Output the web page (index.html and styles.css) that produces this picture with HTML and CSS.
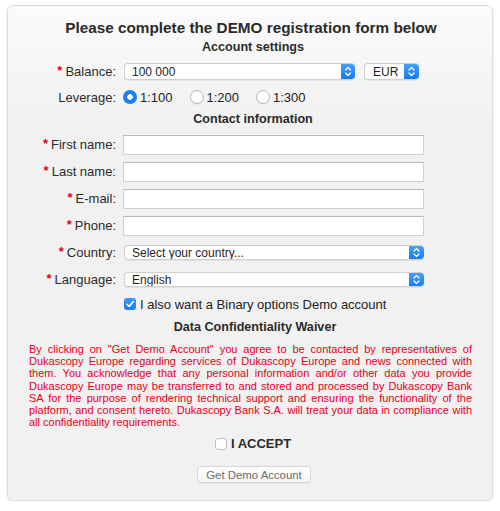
FILE: index.html
```html
<!DOCTYPE html>
<html lang="en">
<head>
<meta charset="utf-8">
<title>DEMO registration</title>
<link rel="stylesheet" href="styles.css">
</head>
<body>
<div class="panel">
  <h1 class="title">Please complete the DEMO registration form below</h1>
  <h2 class="section sec-account">Account settings</h2>

  <div class="row row-balance">
    <label class="row-label"><span class="req">*</span>Balance:</label>
    <div class="field-inline">
      <div class="select select-balance">
        <span class="select-value">100 000</span>
        <span class="select-arrow"><svg viewBox="0 0 14 17" width="14" height="17"><polyline points="4.5,7 7,4.5 9.5,7"/><polyline points="4.5,10 7,12.5 9.5,10"/></svg></span>
      </div>
      <div class="select select-cur">
        <span class="select-value">EUR</span>
        <span class="select-arrow"><svg viewBox="0 0 14 17" width="15" height="17"><polyline points="4.5,7 7,4.5 9.5,7"/><polyline points="4.5,10 7,12.5 9.5,10"/></svg></span>
      </div>
    </div>
  </div>

  <div class="row row-leverage">
    <label class="row-label">Leverage:</label>
    <div class="radios">
      <span class="radio-opt"><span class="radio radio-on"></span>1:100</span>
      <span class="radio-opt"><span class="radio"></span>1:200</span>
      <span class="radio-opt"><span class="radio"></span>1:300</span>
    </div>
  </div>

  <h2 class="section sec-contact">Contact information</h2>

  <div class="row row-field">
    <label class="row-label"><span class="req">*</span>First name:</label>
    <span class="input"></span>
  </div>
  <div class="row row-field">
    <label class="row-label"><span class="req">*</span>Last name:</label>
    <span class="input"></span>
  </div>
  <div class="row row-field">
    <label class="row-label"><span class="req">*</span>E-mail:</label>
    <span class="input"></span>
  </div>
  <div class="row row-field">
    <label class="row-label"><span class="req">*</span>Phone:</label>
    <span class="input"></span>
  </div>
  <div class="row row-field">
    <label class="row-label"><span class="req">*</span>Country:</label>
    <div class="select select-wide">
      <span class="select-value">Select your country...</span>
      <span class="select-arrow"><svg viewBox="0 0 14 15" width="15" height="15"><polyline points="4.5,6 7,3.5 9.5,6"/><polyline points="4.5,9 7,11.5 9.5,9"/></svg></span>
    </div>
  </div>
  <div class="row row-field">
    <label class="row-label"><span class="req">*</span>Language:</label>
    <div class="select select-wide">
      <span class="select-value">English</span>
      <span class="select-arrow"><svg viewBox="0 0 14 15" width="15" height="15"><polyline points="4.5,6 7,3.5 9.5,6"/><polyline points="4.5,9 7,11.5 9.5,9"/></svg></span>
    </div>
  </div>

  <div class="row row-check">
    <span></span>
    <span class="check-line"><span class="checkbox checkbox-on"><svg viewBox="0 0 12 12" width="12" height="12"><polyline points="3,6.3 5.2,8.5 9.2,3.6"/></svg></span>I also want a Binary options Demo account</span>
  </div>

  <h2 class="section sec-waiver">Data Confidentiality Waiver</h2>

  <p class="waiver">By clicking on "Get Demo Account" you agree to be contacted by representatives of Dukascopy Europe regarding services of Dukascopy Europe and news connected with them. You acknowledge that any personal information and/or other data you provide Dukascopy Europe may be transferred to and stored and processed by Dukascopy Bank SA for the purpose of rendering technical support and ensuring the functionality of the platform, and consent hereto. Dukascopy Bank S.A. will treat your data in compliance with all confidentiality requirements.</p>

  <div class="accept">
    <span class="checkbox"></span><span class="accept-text">I ACCEPT</span>
  </div>

  <div class="actions">
    <button class="btn" type="button">Get Demo Account</button>
  </div>
</div>
</body>
</html>
```

FILE: styles.css
```css
* { box-sizing: border-box; }

body {
  margin: 0;
  background: #ffffff;
  font-family: "Liberation Sans", Arial, Helvetica, sans-serif;
  color: #2b2b2b;
}

.panel {
  margin: 5px 0 0 7px;
  width: 486px;
  height: 496px;
  border: 1px solid #dcdcdc;
  border-radius: 6px;
  background: linear-gradient(#fbfbfb, #f1f1f1 120px, #f1f1f1);
  box-shadow: 0 1px 2px rgba(0, 0, 0, 0.12);
}

.title {
  margin: 0;
  padding-top: 12px;
  height: 31px;
  line-height: 20px;
  font-size: 15.3px;
  font-weight: bold;
  text-align: center;
  color: #2b2b2b;
  padding-left: 2px;
}

.section {
  margin: 0;
  font-size: 12.6px;
  font-weight: bold;
  text-align: center;
  color: #2b2b2b;
  padding-left: 6px;
}

.sec-account { height: 20px; line-height: 20px; }
.sec-contact { height: 23px; line-height: 23px; }
.sec-waiver { height: 24px; line-height: 24px; padding-left: 10px; }

.row {
  display: grid;
  grid-template-columns: 108px 1fr;
  column-gap: 8px;
  align-items: center;
  font-size: 13px;
}

.row-balance { height: 29px; }
.row-leverage { height: 22px; }
.row-field { height: 27px; }
.row-check { height: 22px; }

.row-label {
  text-align: right;
  color: #2b2b2b;
  white-space: nowrap;
}

.req {
  color: #e0001b;
  font-weight: bold;
  margin-right: 3px;
  position: relative;
  top: -1px;
}

.field-inline {
  display: flex;
  align-items: center;
  gap: 9px;
}

.select {
  display: flex;
  align-items: stretch;
  background: #ffffff;
  border: 1px solid #cfcfcf;
  border-right: none;
  border-radius: 4px;
  box-shadow: 0 1px 0 rgba(0, 0, 0, 0.06);
  overflow: hidden;
  font-size: 12px;
  color: #1e1e1e;
}

.select-value {
  flex: 1;
  padding-left: 7px;
  display: flex;
  align-items: center;
  white-space: nowrap;
}

.select-arrow {
  flex: none;
  display: flex;
  align-items: center;
  justify-content: center;
  background: linear-gradient(#4aa3ff, #1477f2);
  border-radius: 0 4px 4px 0;
  margin: -1px 0;
}

.select-arrow svg polyline {
  fill: none;
  stroke: #ffffff;
  stroke-width: 1.3;
  stroke-linecap: round;
  stroke-linejoin: round;
}

.select-balance { width: 231px; height: 17px; }
.select-cur { width: 55px; height: 17px; }
.select-cur .select-value { padding-left: 8px; }
.select-wide { width: 300px; height: 15px; }

.radios {
  display: flex;
  align-items: center;
  margin-left: -1px;
}

.radio-opt {
  display: inline-flex;
  align-items: center;
  width: 66.5px;
  flex: none;
  color: #222;
}

.radio {
  width: 14px;
  height: 14px;
  border-radius: 50%;
  background: #ffffff;
  border: 1px solid #b9b9b9;
  margin-right: 3px;
  box-shadow: 0 1px 1px rgba(0, 0, 0, 0.05);
}

.radio-on {
  border: none;
  background: radial-gradient(circle, #ffffff 0 2.6px, #1b7ef5 3px);
}

.input {
  display: block;
  width: 301px;
  height: 20px;
  margin-left: -1px;
  background: #ffffff;
  border: 1px solid #d0d0d0;
  border-top-color: #b8b8b8;
}

.check-line {
  display: flex;
  align-items: center;
  color: #222;
}

.checkbox {
  display: inline-block;
  width: 12px;
  height: 12px;
  border-radius: 3px;
  background: #ffffff;
  border: 1px solid #bdbdbd;
  margin-right: 4px;
}

.checkbox-on {
  border: none;
  background: linear-gradient(#3d98fd, #1a7cf4);
}

.checkbox svg {
  display: block;
}

.checkbox svg polyline {
  fill: none;
  stroke: #ffffff;
  stroke-width: 1.6;
  stroke-linecap: round;
  stroke-linejoin: round;
}

.waiver {
  margin: 4px 0 0;
  padding: 0 20px 0 21px;
  font-size: 11px;
  line-height: 12.2px;
  color: #e3001a;
  text-align: justify;
}

.accept {
  height: 31px;
  display: flex;
  align-items: center;
  justify-content: center;
  padding-left: 6px;
}

.accept .checkbox {
  margin-right: 4px;
}

.accept-text {
  font-size: 13px;
  font-weight: bold;
  color: #2b2b2b;
}

.actions {
  display: flex;
  justify-content: center;
  margin-top: 7px;
  padding-left: 8px;
}

.btn {
  width: 114px;
  height: 17px;
  padding: 0;
  font-family: "Liberation Sans", Arial, sans-serif;
  font-size: 11.4px;
  color: #6e6e6e;
  background: linear-gradient(#ffffff, #f4f4f4);
  border: 1px solid #d6d6d6;
  border-radius: 4px;
  box-shadow: 0 1px 0 rgba(0, 0, 0, 0.04);
}
```
